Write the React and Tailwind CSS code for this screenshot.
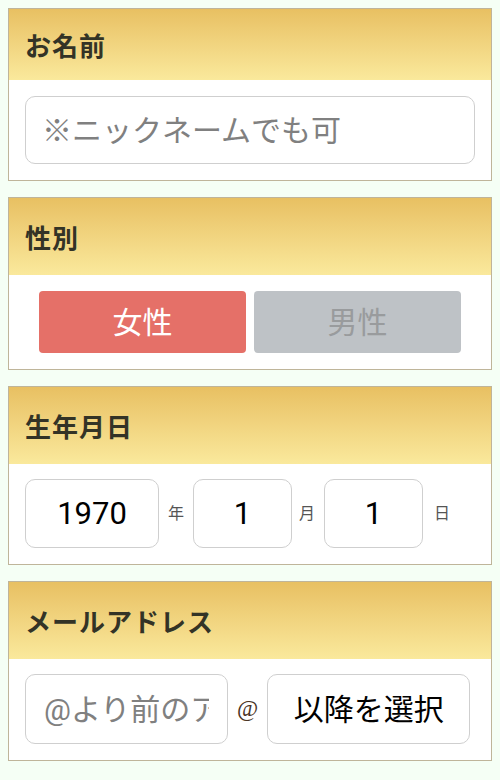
import React, { useState } from 'react';

const font = 'font-["Roboto","Noto_Sans_CJK_JP",sans-serif]';

const Section = ({ title, headerH, children }) => (
  <section className="bg-white border border-[#bfb59a]">
    <div
      className={`flex items-center pl-[16px] bg-gradient-to-b from-[#e8c062] to-[#fae99c] ${headerH}`}
    >
      <h2 className="text-[26px] font-bold text-[#333326] tracking-[1px] font-['Noto_Sans_CJK_JP',serif]">
        {title}
      </h2>
    </div>
    {children}
  </section>
);

const App = () => {
  const [gender, setGender] = useState('female');

  return (
    <div className={`min-h-[780px] bg-[#f5fff5] px-2 pt-2 pb-4 flex flex-col gap-4 ${font}`}>
      {/* お名前 */}
      <Section title="お名前" headerH="h-[71px]">
        <div className="px-4 pt-4 pb-4">
          <input
            className="w-full h-[68px] rounded-[10px] border border-[#cfcfcf] px-4 text-[30px] text-[#333] placeholder:text-[#808080] outline-none"
            placeholder="※ニックネームでも可"
          />
        </div>
      </Section>

      {/* 性別 */}
      <Section title="性別" headerH="h-[77px]">
        <div className="flex gap-2 px-[30px] pt-4 pb-4">
          <button
            onClick={() => setGender('female')}
            className={`flex-1 h-[62px] rounded-[4px] text-[30px] ${
              gender === 'female' ? 'bg-[#e57068] text-white' : 'bg-[#bec2c6] text-[#999b9d]'
            }`}
          >
            女性
          </button>
          <button
            onClick={() => setGender('male')}
            className={`flex-1 h-[62px] rounded-[4px] text-[30px] ${
              gender === 'male' ? 'bg-[#e57068] text-white' : 'bg-[#bec2c6] text-[#999b9d]'
            }`}
          >
            男性
          </button>
        </div>
      </Section>

      {/* 生年月日 */}
      <Section title="生年月日" headerH="h-[77px]">
        <div className="flex items-center px-4 pt-[15px] pb-4">
          <input
            defaultValue="1970"
            className="w-[134px] h-[69px] rounded-[10px] border border-[#cfcfcf] text-center text-[31px] text-black outline-none"
          />
          <span className="mx-[9px] text-[16px] text-[#555]">年</span>
          <input
            defaultValue="1"
            className="w-[99px] h-[69px] rounded-[10px] border border-[#cfcfcf] text-center text-[31px] text-black outline-none"
          />
          <span className="ml-[7px] mr-[9px] text-[16px] text-[#555]">月</span>
          <input
            defaultValue="1"
            className="w-[99px] h-[69px] rounded-[10px] border border-[#cfcfcf] text-center text-[31px] text-black outline-none"
          />
          <span className="ml-[11px] text-[16px] text-[#555]">日</span>
        </div>
      </Section>

      {/* メールアドレス */}
      <Section title="メールアドレス" headerH="h-[77px]">
        <div className="flex items-center px-4 pt-[15px] pb-4">
          <input
            className="w-[203px] h-[70px] rounded-[10px] border border-[#cfcfcf] px-[18px] text-[30px] text-[#333] placeholder:text-[#808080] outline-none"
            placeholder="@より前のアドレス"
          />
          <span className="mx-[9px] text-[23px] text-[#4a3426] font-['Liberation_Serif',serif]">@</span>
          <button className="w-[203px] h-[70px] rounded-[10px] border border-[#cfcfcf] text-[30px] text-black">
            以降を選択
          </button>
        </div>
      </Section>
    </div>
  );
};

export default App;
